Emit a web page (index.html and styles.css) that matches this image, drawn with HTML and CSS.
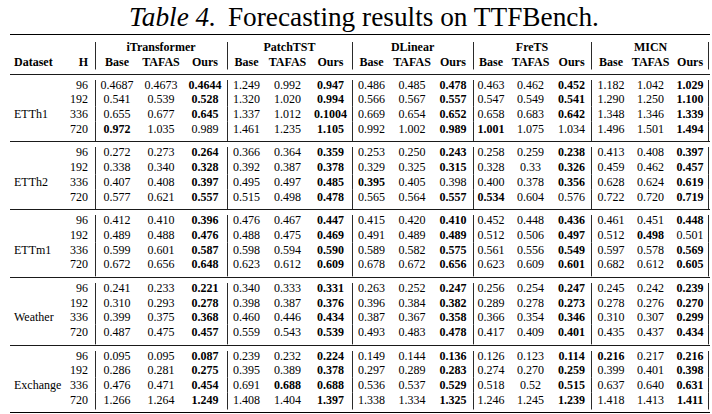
FILE: index.html
```html
<!DOCTYPE html>
<html lang="en">
<head>
<meta charset="utf-8">
<title>Table 4. Forecasting results on TTFBench.</title>
<link rel="stylesheet" href="styles.css">
</head>
<body>
<div class="page">
<p class="caption"><i class="label">Table 4.</i> Forecasting results on TTFBench.</p>
<table class="results">
<colgroup>
<col class="c-ds"><col class="c-h">
<col class="c44"><col class="c44"><col class="c44">
<col class="c39"><col class="c43"><col class="c43">
<col class="c39"><col class="c42"><col class="c40">
<col class="c36"><col class="c43"><col class="c39">
<col class="c40"><col class="c39"><col class="c40">
</colgroup>
<thead>
<tr><th colspan="2"></th><th colspan="3" class="g">iTransformer</th><th colspan="3" class="g">PatchTST</th><th colspan="3" class="g">DLinear</th><th colspan="3" class="g">FreTS</th><th colspan="3" class="g e">MICN</th></tr>
<tr><th class="ds">Dataset</th><th class="h">H</th><th class="g">Base</th><th>TAFAS</th><th>Ours</th><th class="g">Base</th><th>TAFAS</th><th>Ours</th><th class="g">Base</th><th>TAFAS</th><th>Ours</th><th class="g">Base</th><th>TAFAS</th><th>Ours</th><th class="g">Base</th><th>TAFAS</th><th class="e">Ours</th></tr>
</thead>
<tbody>
<tr><td class="ds"></td><td class="h">96</td><td class="g">0.4687</td><td>0.4673</td><td><b>0.4644</b></td><td class="g">1.249</td><td>0.992</td><td><b>0.947</b></td><td class="g">0.486</td><td>0.485</td><td><b>0.478</b></td><td class="g">0.463</td><td>0.462</td><td><b>0.452</b></td><td class="g">1.182</td><td>1.042</td><td class="e"><b>1.029</b></td></tr>
<tr><td class="ds"></td><td class="h">192</td><td class="g">0.541</td><td>0.539</td><td><b>0.528</b></td><td class="g">1.320</td><td>1.020</td><td><b>0.994</b></td><td class="g">0.566</td><td>0.567</td><td><b>0.557</b></td><td class="g">0.547</td><td>0.549</td><td><b>0.541</b></td><td class="g">1.290</td><td>1.250</td><td class="e"><b>1.100</b></td></tr>
<tr><td class="ds">ETTh1</td><td class="h">336</td><td class="g">0.655</td><td>0.677</td><td><b>0.645</b></td><td class="g">1.337</td><td>1.012</td><td><b>0.1004</b></td><td class="g">0.669</td><td>0.654</td><td><b>0.652</b></td><td class="g">0.658</td><td>0.683</td><td><b>0.642</b></td><td class="g">1.348</td><td>1.346</td><td class="e"><b>1.339</b></td></tr>
<tr><td class="ds"></td><td class="h">720</td><td class="g"><b>0.972</b></td><td>1.035</td><td>0.989</td><td class="g">1.461</td><td>1.235</td><td><b>1.105</b></td><td class="g">0.992</td><td>1.002</td><td><b>0.989</b></td><td class="g"><b>1.001</b></td><td>1.075</td><td>1.034</td><td class="g">1.496</td><td>1.501</td><td class="e"><b>1.494</b></td></tr>
</tbody>
<tbody>
<tr><td class="ds"></td><td class="h">96</td><td class="g">0.272</td><td>0.273</td><td><b>0.264</b></td><td class="g">0.366</td><td>0.364</td><td><b>0.359</b></td><td class="g">0.253</td><td>0.250</td><td><b>0.243</b></td><td class="g">0.258</td><td>0.259</td><td><b>0.238</b></td><td class="g">0.413</td><td>0.408</td><td class="e"><b>0.397</b></td></tr>
<tr><td class="ds"></td><td class="h">192</td><td class="g">0.338</td><td>0.340</td><td><b>0.328</b></td><td class="g">0.392</td><td>0.387</td><td><b>0.378</b></td><td class="g">0.329</td><td>0.325</td><td><b>0.315</b></td><td class="g">0.328</td><td>0.33</td><td><b>0.326</b></td><td class="g">0.459</td><td>0.462</td><td class="e"><b>0.457</b></td></tr>
<tr><td class="ds">ETTh2</td><td class="h">336</td><td class="g">0.407</td><td>0.408</td><td><b>0.397</b></td><td class="g">0.495</td><td>0.497</td><td><b>0.485</b></td><td class="g"><b>0.395</b></td><td>0.405</td><td>0.398</td><td class="g">0.400</td><td>0.378</td><td><b>0.356</b></td><td class="g">0.628</td><td>0.624</td><td class="e"><b>0.619</b></td></tr>
<tr><td class="ds"></td><td class="h">720</td><td class="g">0.577</td><td>0.621</td><td><b>0.557</b></td><td class="g">0.515</td><td>0.498</td><td><b>0.478</b></td><td class="g">0.565</td><td>0.564</td><td><b>0.557</b></td><td class="g"><b>0.534</b></td><td>0.604</td><td>0.576</td><td class="g">0.722</td><td>0.720</td><td class="e"><b>0.719</b></td></tr>
</tbody>
<tbody>
<tr><td class="ds"></td><td class="h">96</td><td class="g">0.412</td><td>0.410</td><td><b>0.396</b></td><td class="g">0.476</td><td>0.467</td><td><b>0.447</b></td><td class="g">0.415</td><td>0.420</td><td><b>0.410</b></td><td class="g">0.452</td><td>0.448</td><td><b>0.436</b></td><td class="g">0.461</td><td>0.451</td><td class="e"><b>0.448</b></td></tr>
<tr><td class="ds"></td><td class="h">192</td><td class="g">0.489</td><td>0.488</td><td><b>0.476</b></td><td class="g">0.488</td><td>0.475</td><td><b>0.469</b></td><td class="g">0.491</td><td>0.489</td><td><b>0.489</b></td><td class="g">0.512</td><td>0.506</td><td><b>0.497</b></td><td class="g">0.512</td><td><b>0.498</b></td><td class="e">0.501</td></tr>
<tr><td class="ds">ETTm1</td><td class="h">336</td><td class="g">0.599</td><td>0.601</td><td><b>0.587</b></td><td class="g">0.598</td><td>0.594</td><td><b>0.590</b></td><td class="g">0.589</td><td>0.582</td><td><b>0.575</b></td><td class="g">0.561</td><td>0.556</td><td><b>0.549</b></td><td class="g">0.597</td><td>0.578</td><td class="e"><b>0.569</b></td></tr>
<tr><td class="ds"></td><td class="h">720</td><td class="g">0.672</td><td>0.656</td><td><b>0.648</b></td><td class="g">0.623</td><td>0.612</td><td><b>0.609</b></td><td class="g">0.678</td><td>0.672</td><td><b>0.656</b></td><td class="g">0.623</td><td>0.609</td><td><b>0.601</b></td><td class="g">0.682</td><td>0.612</td><td class="e"><b>0.605</b></td></tr>
</tbody>
<tbody>
<tr><td class="ds"></td><td class="h">96</td><td class="g">0.241</td><td>0.233</td><td><b>0.221</b></td><td class="g">0.340</td><td>0.333</td><td><b>0.331</b></td><td class="g">0.263</td><td>0.252</td><td><b>0.247</b></td><td class="g">0.256</td><td>0.254</td><td><b>0.247</b></td><td class="g">0.245</td><td>0.242</td><td class="e"><b>0.239</b></td></tr>
<tr><td class="ds"></td><td class="h">192</td><td class="g">0.310</td><td>0.293</td><td><b>0.278</b></td><td class="g">0.398</td><td>0.387</td><td><b>0.376</b></td><td class="g">0.396</td><td>0.384</td><td><b>0.382</b></td><td class="g">0.289</td><td>0.278</td><td><b>0.273</b></td><td class="g">0.278</td><td>0.276</td><td class="e"><b>0.270</b></td></tr>
<tr><td class="ds">Weather</td><td class="h">336</td><td class="g">0.399</td><td>0.375</td><td><b>0.368</b></td><td class="g">0.460</td><td>0.446</td><td><b>0.434</b></td><td class="g">0.387</td><td>0.367</td><td><b>0.358</b></td><td class="g">0.366</td><td>0.354</td><td><b>0.346</b></td><td class="g">0.310</td><td>0.307</td><td class="e"><b>0.299</b></td></tr>
<tr><td class="ds"></td><td class="h">720</td><td class="g">0.487</td><td>0.475</td><td><b>0.457</b></td><td class="g">0.559</td><td>0.543</td><td><b>0.539</b></td><td class="g">0.493</td><td>0.483</td><td><b>0.478</b></td><td class="g">0.417</td><td>0.409</td><td><b>0.401</b></td><td class="g">0.435</td><td>0.437</td><td class="e"><b>0.434</b></td></tr>
</tbody>
<tbody>
<tr><td class="ds"></td><td class="h">96</td><td class="g">0.095</td><td>0.095</td><td><b>0.087</b></td><td class="g">0.239</td><td>0.232</td><td><b>0.224</b></td><td class="g">0.149</td><td>0.144</td><td><b>0.136</b></td><td class="g">0.126</td><td>0.123</td><td><b>0.114</b></td><td class="g"><b>0.216</b></td><td>0.217</td><td class="e"><b>0.216</b></td></tr>
<tr><td class="ds"></td><td class="h">192</td><td class="g">0.286</td><td>0.281</td><td><b>0.275</b></td><td class="g">0.395</td><td>0.389</td><td><b>0.378</b></td><td class="g">0.297</td><td>0.289</td><td><b>0.283</b></td><td class="g">0.274</td><td>0.270</td><td><b>0.259</b></td><td class="g">0.399</td><td>0.401</td><td class="e"><b>0.398</b></td></tr>
<tr><td class="ds">Exchange</td><td class="h">336</td><td class="g">0.476</td><td>0.471</td><td><b>0.454</b></td><td class="g">0.691</td><td><b>0.688</b></td><td><b>0.688</b></td><td class="g">0.536</td><td>0.537</td><td><b>0.529</b></td><td class="g">0.518</td><td>0.52</td><td><b>0.515</b></td><td class="g">0.637</td><td>0.640</td><td class="e"><b>0.631</b></td></tr>
<tr><td class="ds"></td><td class="h">720</td><td class="g">1.266</td><td>1.264</td><td><b>1.249</b></td><td class="g">1.408</td><td>1.404</td><td><b>1.397</b></td><td class="g">1.338</td><td>1.334</td><td><b>1.325</b></td><td class="g">1.246</td><td>1.245</td><td><b>1.239</b></td><td class="g">1.418</td><td>1.413</td><td class="e"><b>1.411</b></td></tr>
</tbody>
</table>
</div>
</body>
</html>
```

FILE: styles.css
```css
html, body {
  margin: 0;
  padding: 0;
  background: #ffffff;
}

body {
  font-family: "Liberation Serif", "Times New Roman", serif;
  color: #000000;
}

.page {
  width: 700px;
  padding-left: 10px;
}

.caption {
  margin: 0;
  height: 34px;
  padding-left: 8px;
  font-size: 27.3px;
  line-height: 34px;
  text-align: center;
  white-space: nowrap;
}

.caption .label {
  margin-right: 5px;
}

.results {
  --rule: #2a2a2a;
  width: 700px;
  table-layout: fixed;
  border-collapse: separate;
  border-spacing: 0;
  border-top: 1.5px solid #000;
  border-bottom: 1.5px solid #000;
  font-size: 12px;
}

.c-ds { width: 58px; }
.c-h { width: 27px; }
.c36 { width: 36px; }
.c39 { width: 39px; }
.c40 { width: 40px; }
.c42 { width: 42px; }
.c43 { width: 43px; }
.c44 { width: 44px; }

.results th,
.results td {
  padding: 0;
  text-align: center;
  white-space: nowrap;
  vertical-align: top;
}

.results th {
  font-weight: bold;
  line-height: 15px;
}

.results td {
  font-weight: normal;
  line-height: 14.8px;
}

.results b {
  font-weight: bold;
}

.results .ds {
  text-align: left;
  padding-left: 4px;
}

.results .h {
  text-align: right;
  padding-right: 7px;
}

/* header spacing */
.results thead tr:first-child th {
  padding-top: 5px;
  --bt: 6.5px;
}

.results thead tr:last-child th {
  padding-bottom: 3.5px;
  --bb: 4px;
}

/* group spacing and mid rules */
.results tbody tr:first-child td {
  border-top: 1px solid #1a1a1a;
  padding-top: 3px;
  --bt: 5px;
}

.results tbody tr:last-child td {
  padding-bottom: 4.6px;
}

.results tbody:last-child tr:last-child td {
  --bb: 2.5px;
}

/* vertical group separators */
.results .g {
  background: linear-gradient(var(--rule), var(--rule)) no-repeat left 0 bottom var(--bb, 0px) / 1px calc(100% - var(--bt, 0px) - var(--bb, 0px));
}

.results .e {
  background: linear-gradient(var(--rule), var(--rule)) no-repeat right 1px bottom var(--bb, 0px) / 1px calc(100% - var(--bt, 0px) - var(--bb, 0px));
}

.results .g.e {
  background:
    linear-gradient(var(--rule), var(--rule)) no-repeat left 0 bottom var(--bb, 0px) / 1px calc(100% - var(--bt, 0px) - var(--bb, 0px)),
    linear-gradient(var(--rule), var(--rule)) no-repeat right 1px bottom var(--bb, 0px) / 1px calc(100% - var(--bt, 0px) - var(--bb, 0px));
}
```
